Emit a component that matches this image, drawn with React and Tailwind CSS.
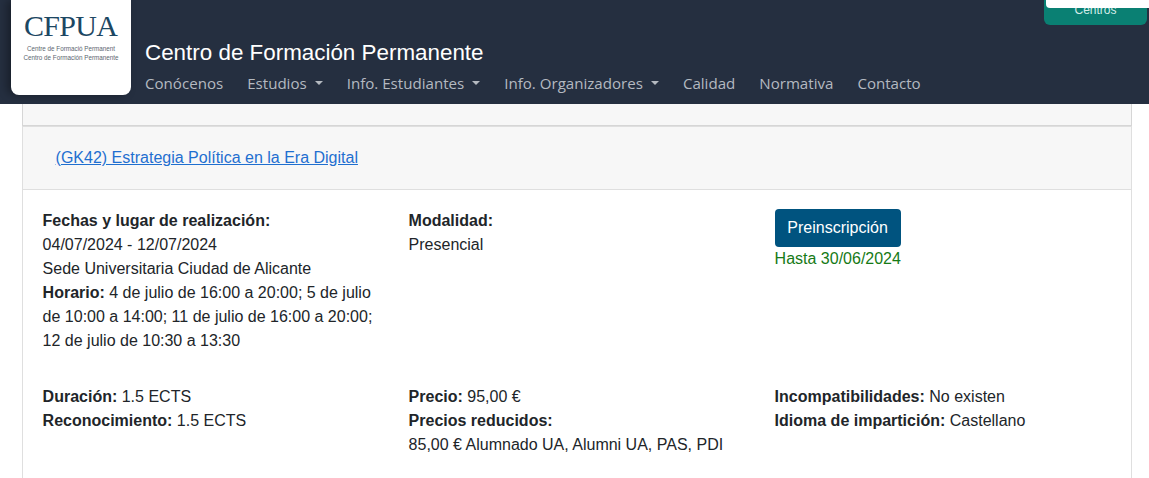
import React from 'react';

const navItems = [
    { label: 'Conócenos' },
    { label: 'Estudios', caret: true },
    { label: 'Info. Estudiantes', caret: true },
    { label: 'Info. Organizadores', caret: true },
    { label: 'Calidad' },
    { label: 'Normativa' },
    { label: 'Contacto' },
];

const Header = () => (
    <header className="relative flex h-[104px] bg-[#252f40]">
        <div className="ml-[11px] flex h-[95px] w-[120px] flex-col items-center rounded-b-lg bg-white pt-[12px] shadow-[-4px_0_8px_rgba(0,0,0,0.35)]">
            <div className="-ml-[1px] font-['Liberation_Serif',serif] text-[30px] leading-[28px] tracking-[-0.7px] text-[#1c4763]">CFPUA</div>
            <div className="mt-[4px] whitespace-nowrap text-center font-['Liberation_Sans',sans-serif] text-[6.3px] leading-[9px] text-[#5b6670]">
                <div>Centre de Formació Permanent</div>
                <div>Centro de Formación Permanente</div>
            </div>
        </div>
        <div className="ml-[14px] pt-[41px]">
            <div className="font-['Liberation_Sans',sans-serif] text-[22.4px] leading-[24px] text-white">
                Centro de Formación Permanente
            </div>
            <nav className="mt-[6px] flex gap-[24px] font-['Open_Sans',sans-serif] text-[15.1px] leading-[24px] text-[#b4b9c0]">
                {navItems.map((item) => (
                    <a key={item.label} href="#" className="flex items-center whitespace-nowrap">
                        {item.label}
                        {item.caret && (
                            <span className="ml-[8px] h-0 w-0 border-x-[4px] border-t-[4px] border-x-transparent border-t-[#b4b9c0]" />
                        )}
                    </a>
                ))}
            </nav>
        </div>
        {/* Centros button, covered by the white panel above it */}
        <div className="absolute right-[2px] top-0 h-[25px] w-[103px] rounded-b-md bg-[#0a8073] pt-[2px] text-center font-['Liberation_Sans',sans-serif] text-[12px] leading-[16px] text-[#d5ece8]">
            Centros
        </div>
        <div className="absolute right-0 top-0 h-[8px] w-[103px] rounded-bl-sm bg-white" />
    </header>
);

const Label = ({ children }) => <strong className="font-bold">{children}</strong>;

const App = () => (
    <div className="h-[478px] overflow-hidden bg-white font-['Liberation_Sans',sans-serif] text-[16px] leading-[24px] text-[#212529]">
        <Header />
        <main className="ml-[22px] w-[1110px]">
            <div className="h-[22px] border-x border-b border-[#d6d6d6] bg-[#f7f7f7]" />
            <section className="h-[400px] border border-[#dfdfdf]">
                <div className="flex h-[63px] items-center border-b border-[#dfdfdf] bg-[#f7f7f7] pl-[32.6px]">
                    <a href="#" className="text-[#1f6fd0] underline">(GK42) Estrategia Política en la Era Digital</a>
                </div>
                <div className="pl-[19.6px] pr-[20px] pt-[19px]">
                    <div className="grid grid-cols-[366px_366px_1fr]">
                        <div className="w-[335px]">
                            <div><Label>Fechas y lugar de realización:</Label></div>
                            <div>04/07/2024 - 12/07/2024</div>
                            <div>Sede Universitaria Ciudad de Alicante</div>
                            <div><Label>Horario:</Label> 4 de julio de 16:00 a 20:00; 5 de julio de 10:00 a 14:00; 11 de julio de 16:00 a 20:00; 12 de julio de 10:30 a 13:30</div>
                        </div>
                        <div>
                            <div><Label>Modalidad:</Label></div>
                            <div>Presencial</div>
                        </div>
                        <div>
                            <button className="block h-[38px] w-[126px] rounded-[4px] bg-[#00537f] text-center text-white">Preinscripción</button>
                            <div className="text-[#167a16]">Hasta 30/06/2024</div>
                        </div>
                    </div>
                    <div className="mt-[32px] grid grid-cols-[366px_366px_1fr]">
                        <div>
                            <div><Label>Duración:</Label> 1.5 ECTS</div>
                            <div><Label>Reconocimiento:</Label> 1.5 ECTS</div>
                        </div>
                        <div>
                            <div><Label>Precio:</Label> 95,00 €</div>
                            <div><Label>Precios reducidos:</Label></div>
                            <div>85,00 € Alumnado UA, Alumni UA, PAS, PDI</div>
                        </div>
                        <div>
                            <div><Label>Incompatibilidades:</Label> No existen</div>
                            <div><Label>Idioma de impartición:</Label> Castellano</div>
                        </div>
                    </div>
                </div>
            </section>
        </main>
    </div>
);

export default App;
